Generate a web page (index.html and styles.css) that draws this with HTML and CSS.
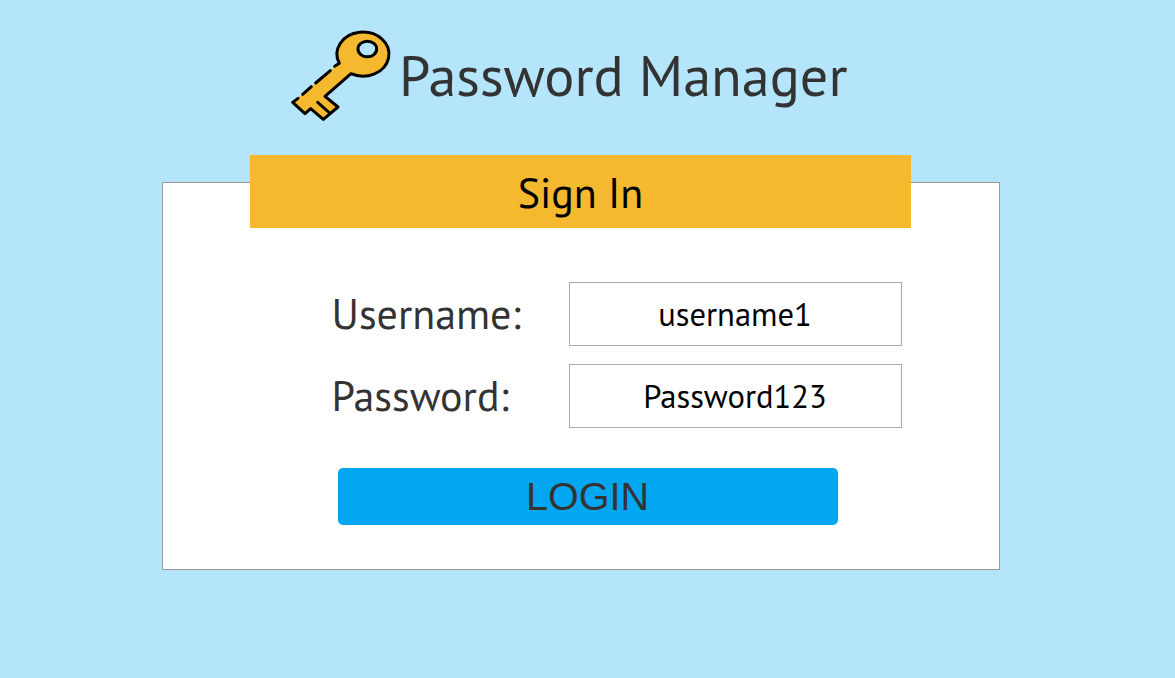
FILE: index.html
```html
<!DOCTYPE html>
<html lang="en">
<head>
<meta charset="utf-8">
<title>Password Manager</title>
<link rel="stylesheet" href="styles.css">
</head>
<body>
<header class="header">
  <svg class="key" viewBox="0 0 360 330" aria-hidden="true">
    <path class="key-fill" d="M178 130A78 66 0 1 1 213 161L135 229L174 261L130 298L92 266L75 281L38 247Z"/>
    <path class="key-line" d="M164 139L178 130A78 66 0 1 1 213 161L135 229L174 261L130 298L92 266L75 281L38 247L54 235M68 223L94 200M107 189L151 152M113 247L149 279"/>
    <ellipse class="key-hole" cx="262" cy="87" rx="28" ry="23.5"/>
  </svg>
  <h1 class="title">Password Manager</h1>
</header>
<main class="card">
  <h2 class="banner">Sign In</h2>
  <form class="form">
    <div class="row">
      <label class="label" for="user">Username:</label>
      <input class="field" id="user" type="text" value="username1">
    </div>
    <div class="row">
      <label class="label" for="pass">Password:</label>
      <input class="field" id="pass" type="text" value="Password123">
    </div>
    <button class="login" type="button">LOGIN</button>
  </form>
</main>
</body>
</html>
```
FILE: styles.css
```css
* { box-sizing: border-box; }
body {
  margin: 0;
  height: 678px;
  overflow: hidden;
  background: #b4e5fb;
  color: #333;
  font-family: "PT Sans", "Noto Sans", sans-serif;
}
.header {
  display: flex;
  height: 182px;
  padding: 20px 0 0 280px;
}
.key { width: 120px; height: 110px; flex: none; }
.key-fill { fill: #f4b92f; }
.key-line {
  fill: none;
  stroke: #000;
  stroke-width: 9;
  stroke-linejoin: round;
  stroke-linecap: round;
}
.key-hole { fill: #b4e5fb; stroke: #000; stroke-width: 9; }
.title {
  margin: 16px 0 0 -4px;
  padding-left: 3px;
  font-size: 56.2px;
  font-weight: 400;
  line-height: 80px;
  white-space: nowrap;
}
.card {
  width: 838px;
  height: 388px;
  margin-left: 162px;
  border: 1px solid #999;
  background: #fff;
}
.banner {
  width: 661px;
  height: 73px;
  margin: -28px 0 0 87px;
  background: #f4b92f;
  color: #000;
  font-size: 42px;
  font-weight: 400;
  line-height: 75px;
  text-align: center;
}
.form { padding: 54px 0 0 168.5px; }
.row {
  display: flex;
  height: 64px;
  margin-bottom: 18px;
}
.label {
  width: 237.5px;
  flex: none;
  font-size: 42px;
  line-height: 64px;
}
.field {
  width: 333px;
  height: 64px;
  padding: 0 1px 1px 0;
  border: 1px solid #aaa;
  background: #fff;
  color: #000;
  font-family: "PT Sans", "Noto Sans", sans-serif;
  font-size: 32.6px;
  text-align: center;
}
.login {
  display: block;
  width: 500px;
  height: 56.5px;
  margin: 40px 0 0 6.5px;
  padding: 0 1px 0 0;
  border: 0;
  border-radius: 5px;
  background: #03a7f1;
  color: #333;
  font-family: "Liberation Sans", Arial, sans-serif;
  font-size: 39.5px;
  line-height: 55px;
}
```
